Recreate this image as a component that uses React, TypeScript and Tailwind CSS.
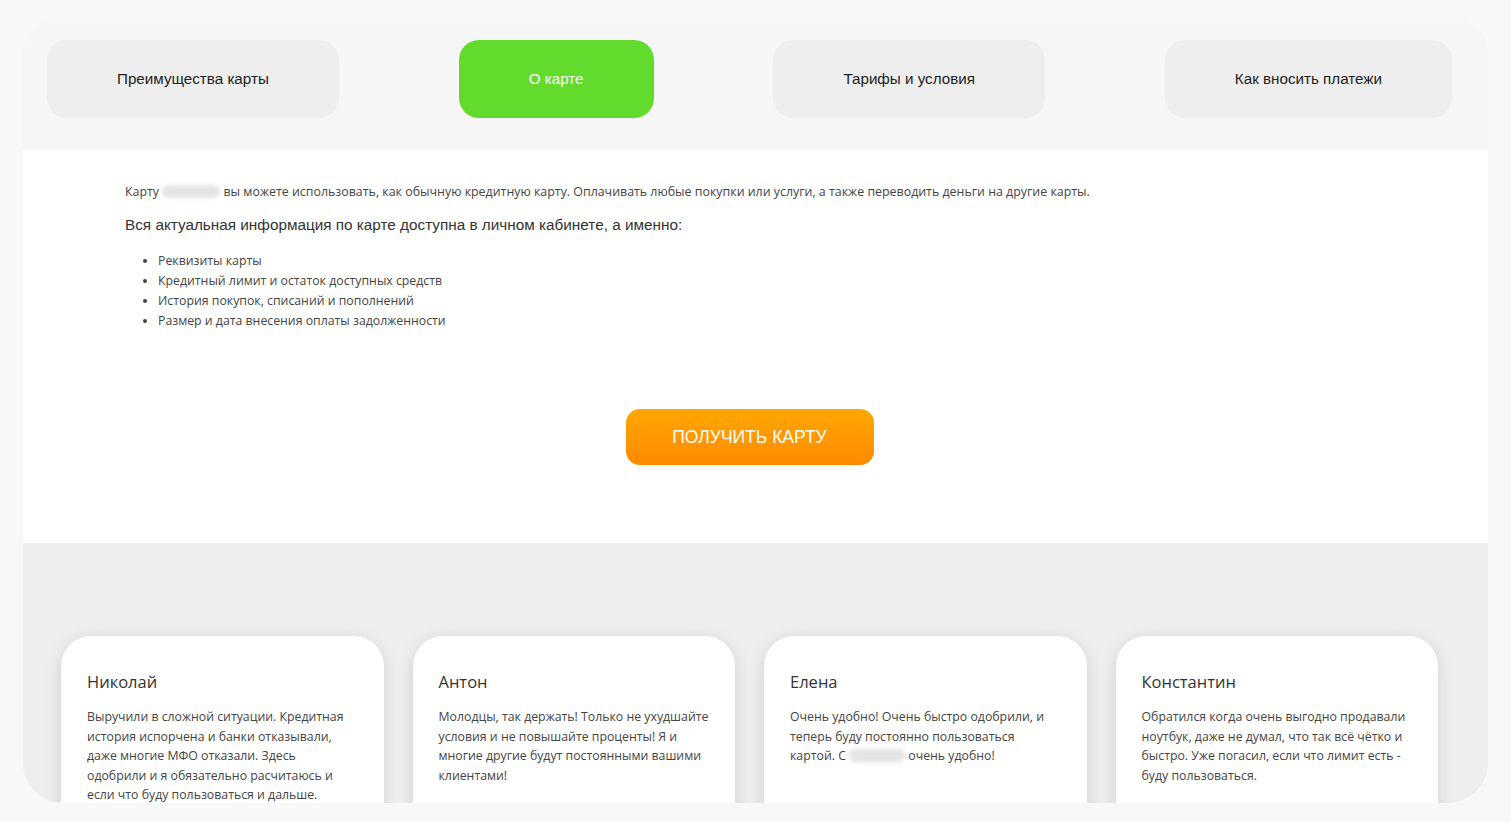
const TABS = [
  { label: "Преимущества карты", active: false },
  { label: "О карте", active: true },
  { label: "Тарифы и условия", active: false },
  { label: "Как вносить платежи", active: false },
];

const FEATURES = [
  "Реквизиты карты",
  "Кредитный лимит и остаток доступных средств",
  "История покупок, списаний и пополнений",
  "Размер и дата внесения оплаты задолженности",
];

const BODY_FONT = '"Open Sans", "Noto Sans", sans-serif';

function Blurred({ w }: { w: string }) {
  return (
    <span
      className={`inline-block h-[13px] ${w} rounded-full bg-[#e4e4e4] align-[-2px] blur-[2px]`}
    />
  );
}

function ReviewCard({ name, children }: { name: string; children: React.ReactNode }) {
  return (
    <div className="h-[220px] rounded-[30px] bg-white px-[26px] pt-[35px] shadow-[0_4px_18px_rgba(0,0,0,0.12)]">
      <div className="text-[16.5px] leading-[22px] text-[#333]">{name}</div>
      <p className="mt-[14px] text-[12.3px] leading-[19.6px] text-[#444]">{children}</p>
    </div>
  );
}

export default function App() {
  return (
    <div
      className="min-h-[822px] bg-[#f8f8f8] px-[23px] pt-[18px]"
      style={{ fontFamily: '"Liberation Sans", Arial, sans-serif' }}
    >
      <div className="flex h-[785px] flex-col overflow-hidden rounded-t-[34px] rounded-b-[40px] bg-[#f6f6f6]">
        {/* Tabs */}
        <div className="flex h-[132px] shrink-0 items-start justify-between pl-[24px] pr-[36px] pt-[22px]">
          {TABS.map((t) => (
            <div
              key={t.label}
              className={
                t.active
                  ? "flex h-[78px] items-center rounded-[20px] bg-[#63db2c] px-[70px] text-[15.2px] text-white"
                  : "flex h-[78px] items-center rounded-[20px] bg-[#eeeeee] px-[70px] text-[15.2px] text-[#222]"
              }
            >
              {t.label}
            </div>
          ))}
        </div>

        {/* About card */}
        <div className="h-[393px] shrink-0 bg-white pl-[102px] pr-[114px] pt-[33px]">
          <p className="text-[12.4px] leading-[18px] text-[#444]" style={{ fontFamily: BODY_FONT }}>
            Карту <Blurred w="w-[58px]" /> вы можете использовать, как обычную кредитную карту.
            Оплачивать любые покупки или услуги, а также переводить деньги на другие карты.
          </p>
          <p className="mt-[14px] text-[15.3px] leading-[20px] text-[#333]">
            Вся актуальная информация по карте доступна в личном кабинете, а именно:
          </p>
          <ul
            className="mt-[16px] list-disc pl-[33px] text-[12.3px] leading-[20px] text-[#444]"
            style={{ fontFamily: BODY_FONT }}
          >
            {FEATURES.map((f) => (
              <li key={f}>{f}</li>
            ))}
          </ul>
          <div className="mt-[78px] flex justify-center">
            <button className="h-[56px] w-[248px] rounded-[14px] bg-gradient-to-b from-[#ffa700] to-[#ff8a00] text-[17.5px] text-white">
              ПОЛУЧИТЬ КАРТУ
            </button>
          </div>
        </div>

        {/* Reviews */}
        <div className="flex-1 bg-[#eeeeee] px-[38px] pt-[93px]" style={{ fontFamily: BODY_FONT }}>
          <div className="grid grid-cols-4 gap-[29px] pr-[12px]">
            <ReviewCard name="Николай">
              Выручили в сложной ситуации. Кредитная история испорчена и банки отказывали,
              даже многие МФО отказали. Здесь одобрили и я обязательно расчитаюсь и если что
              буду пользоваться и дальше.
            </ReviewCard>
            <ReviewCard name="Антон">
              Молодцы, так держать! Только не ухудшайте условия и не повышайте проценты! Я и
              многие другие будут постоянными вашими клиентами!
            </ReviewCard>
            <ReviewCard name="Елена">
              Очень удобно! Очень быстро одобрили, и теперь буду постоянно пользоваться
              картой. С <Blurred w="w-[56px]" /> очень удобно!
            </ReviewCard>
            <ReviewCard name="Константин">
              Обратился когда очень выгодно продавали ноутбук, даже не думал, что так всё
              чётко и быстро. Уже погасил, если что лимит есть - буду пользоваться.
            </ReviewCard>
          </div>
        </div>
      </div>
    </div>
  );
}
